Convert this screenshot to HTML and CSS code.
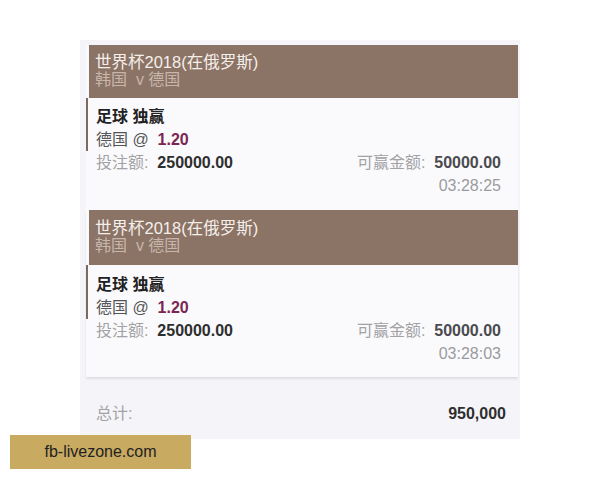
FILE: index.html
```html
<!DOCTYPE html>
<html lang="zh">
<head>
  <meta charset="UTF-8" />
  <meta name="viewport" content="width=device-width, initial-scale=1.0" />
  <title>投注记录</title>
  <link rel="stylesheet" href="styles.css">
</head>
<body>
  <div class="panel">
    <div class="card">
      <div class="match">
        <div class="league">世界杯2018(在俄罗斯)</div>
        <div class="teams">韩国 &nbsp;v 德国</div>
      </div>
      <div class="pick">
        <div class="market">足球 独赢</div>
        <div class="selection">德国 @ &nbsp;<span class="odds">1.20</span></div>
      </div>
      <div class="row">
        <span><span class="label">投注额:</span> &nbsp;<b class="value">250000.00</b></span>
        <span><span class="label">可赢金额:</span> &nbsp;<b class="value win">50000.00</b></span>
      </div>
      <div class="time">03:28:25</div>
    </div>

    <div class="card last">
      <div class="match">
        <div class="league">世界杯2018(在俄罗斯)</div>
        <div class="teams">韩国 &nbsp;v 德国</div>
      </div>
      <div class="pick">
        <div class="market">足球 独赢</div>
        <div class="selection">德国 @ &nbsp;<span class="odds">1.20</span></div>
      </div>
      <div class="row">
        <span><span class="label">投注额:</span> &nbsp;<b class="value">250000.00</b></span>
        <span><span class="label">可赢金额:</span> &nbsp;<b class="value win">50000.00</b></span>
      </div>
      <div class="time">03:28:03</div>
    </div>

    <div class="total">
      <span class="label">总计:</span>
      <b class="value">950,000</b>
    </div>
  </div>

  <div class="watermark">fb-livezone.com</div>
</body>
</html>
```

FILE: styles.css
```css
body {
  margin: 0;
  background-color: #fff;
  font-family: 'Liberation Sans', 'Noto Sans CJK SC', sans-serif;
  font-size: 16px;
}
.panel {
  width: 440px;
  margin: 40px 0 0 80px;
  padding-top: 5px;
  background-color: #f5f5f9;
}
.card {
  margin: 0 2px 0 6px;
  padding-bottom: 13px;
  background-color: #fafafc;
}
.card.last {
  padding-bottom: 12px;
  box-shadow: 0 2px 2px rgba(0, 0, 0, 0.09);
}
.last .match {
  padding: 9px 6px 10px;
}
.last .pick {
  padding-top: 8px;
}
.match {
  margin-left: 3px;
  padding: 8px 6px 9px;
  background-color: #8b7365;
  line-height: 18px;
}
.league {
  color: #f5efeb;
  font-size: 16.5px;
}
.teams {
  color: #c8b6ad;
}
.pick {
  border-left: 2px solid #7b6b63;
  padding: 7px 0 0 8px;
  line-height: 23px;
}
.market {
  font-weight: bold;
  color: #222;
}
.selection {
  color: #555;
}
.odds {
  color: #7b2552;
  font-weight: bold;
}
.row {
  display: flex;
  justify-content: space-between;
  padding: 0 17px 0 10px;
  line-height: 23px;
}
.label {
  color: #a2a2a6;
}
.value {
  color: #2e2e2e;
}
.value.win {
  color: #4a4a4e;
}
.time {
  text-align: right;
  padding-right: 17px;
  line-height: 23px;
  color: #9a9a9e;
}
.total {
  display: flex;
  justify-content: space-between;
  padding: 25px 14px 14px 16px;
  line-height: 23px;
}
.watermark {
  position: absolute;
  left: 10px;
  top: 435px;
  width: 181px;
  height: 34px;
  line-height: 34px;
  text-align: center;
  background-color: #c8aa60;
  color: #222;
  font-size: 16px;
}
```
